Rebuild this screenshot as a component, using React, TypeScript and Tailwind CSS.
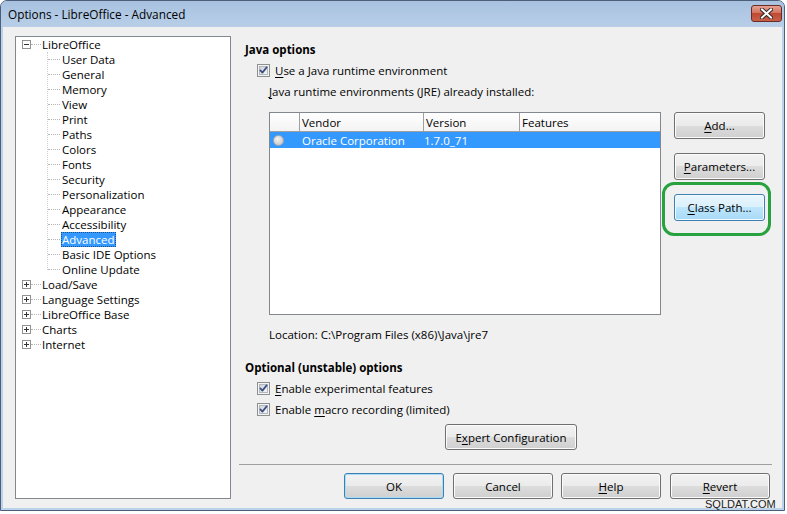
import React from "react";

const btnBase =
  "flex items-center justify-center rounded-[3px] border text-[11.5px] leading-[15px] text-black";
const btnNormal =
  btnBase +
  " border-[#707070] bg-[linear-gradient(to_bottom,#f2f2f2_0%,#ebebeb_50%,#dddddd_50%,#cfcfcf_100%)] shadow-[inset_0_0_0_1px_#fbfbfb]";
const btnHover =
  btnBase +
  " border-[#3c7fb1] bg-[linear-gradient(to_bottom,#eaf6fd_0%,#d9f0fc_50%,#bee6fd_50%,#a7d9f5_100%)] shadow-[inset_0_0_0_1px_#f4fbfe]";
const btnDefault =
  btnBase +
  " border-[#3c7fb1] bg-[linear-gradient(to_bottom,#f2f2f2_0%,#ebebeb_50%,#dddddd_50%,#cfcfcf_100%)] shadow-[inset_0_0_0_1px_#a9dcf6]";

function U({ children }: { children: React.ReactNode }) {
  return <span className="underline underline-offset-[2px]">{children}</span>;
}

function Check() {
  return (
    <svg width="13" height="13" viewBox="0 0 13 13" className="shrink-0">
      <defs>
        <linearGradient id="cbg" x1="0" y1="0" x2="1" y2="1">
          <stop offset="0" stopColor="#cdd2d9" />
          <stop offset="1" stopColor="#f7f8f9" />
        </linearGradient>
      </defs>
      <rect x="0.5" y="0.5" width="12" height="12" fill="#f4f4f4" stroke="#8e8f8f" />
      <rect x="2.5" y="2.5" width="8" height="8" fill="url(#cbg)" stroke="#b2b7be" />
      <path d="M3.4 6.4 L5.4 8.6 L9.6 3.4" stroke="#3b4f80" strokeWidth="1.7" fill="none" strokeLinecap="round" strokeLinejoin="round" />
    </svg>
  );
}

function Expander({ plus }: { plus?: boolean }) {
  return (
    <svg width="9" height="9" viewBox="0 0 9 9" className="shrink-0">
      <rect x="0.5" y="0.5" width="8" height="8" fill="#ffffff" stroke="#919191" />
      <path d="M2 4.5 H7" stroke="#333" strokeWidth="1" />
      {plus && <path d="M4.5 2 V7" stroke="#333" strokeWidth="1" />}
    </svg>
  );
}

const children = [
  "User Data",
  "General",
  "Memory",
  "View",
  "Print",
  "Paths",
  "Colors",
  "Fonts",
  "Security",
  "Personalization",
  "Appearance",
  "Accessibility",
  "Advanced",
  "Basic IDE Options",
  "Online Update",
];
const roots = ["Load/Save", "Language Settings", "LibreOffice Base", "Charts", "Internet"];

function RootRow({ label, plus }: { label: string; plus?: boolean }) {
  return (
    <div className="flex h-[15px] items-center pl-[6px]">
      <Expander plus={plus} />
      <div className="h-0 w-[10px] border-t border-dotted border-[#b4b4b4]" />
      <span className="ml-[1px]">{label}</span>
    </div>
  );
}

function Tree() {
  return (
    <div className="h-[463px] w-[216px] shrink-0 border border-[#828790] bg-white text-[11.5px] leading-[15px] text-black">
      <RootRow label="LibreOffice" />
      <div className="relative">
        <div className="absolute left-[31px] top-0 h-[218px] w-0 border-l border-dotted border-[#d0d0d0]" />
        {children.map((c) => (
          <div key={c} className="flex h-[15px] items-center pl-[32px]">
            <div className="h-0 w-[12px] border-t border-dotted border-[#b4b4b4]" />
            {c === "Advanced" ? (
              <span className="ml-[1px] bg-[#3399ff] px-[1px] text-white outline outline-1 outline-dotted outline-[#1a4f8a] -outline-offset-1">
                {c}
              </span>
            ) : (
              <span className="ml-[2px]">{c}</span>
            )}
          </div>
        ))}
      </div>
      {roots.map((r) => (
        <RootRow key={r} label={r} plus />
      ))}
    </div>
  );
}

function JreTable() {
  return (
    <div className="h-[203px] w-[392px] shrink-0 border border-[#828790] bg-white text-[11.5px] leading-[15px]">
      <div className="flex h-[19px] border-b border-[#a0a0a0] bg-[linear-gradient(to_bottom,#ffffff,#f3f3f3)]">
        <div className="w-[30px] border-r border-[#a0a0a0]" />
        <div className="flex w-[124px] items-center border-r border-[#a0a0a0] pl-[2px]">Vendor</div>
        <div className="flex w-[96px] items-center border-r border-[#a0a0a0] pl-[2px]">Version</div>
        <div className="flex flex-1 items-center pl-[2px]">Features</div>
      </div>
      <div className="flex h-[16px] items-center bg-[#3399ff] text-white">
        <div className="flex w-[30px] items-center pl-[3px]">
          <div className="h-[11px] w-[11px] rounded-full border border-[#a8a8a8] bg-[radial-gradient(circle_at_40%_35%,#f2f2f2,#bdbdbd)]" />
        </div>
        <div className="w-[124px] pl-[2px]">Oracle Corporation</div>
        <div className="w-[96px]">1.7.0_71</div>
      </div>
    </div>
  );
}

export default function App() {
  return (
    <div className="relative h-[514px] w-[787px] overflow-hidden bg-white font-['Open_Sans',sans-serif] text-[11.5px] leading-[15px] text-black">
      <div className="flex h-[511px] w-[785px] flex-col rounded-t-[7px] border border-[#4b5f78] bg-[#bcd2ea]">
        {/* Title bar */}
        <div className="relative flex h-[26px] shrink-0 items-center rounded-t-[6px] bg-[linear-gradient(to_bottom,#a7c1df,#b9cfe8)] pl-[7px]">
          <span className="text-[11.8px] text-black">Options - LibreOffice - Advanced</span>
          <div className="absolute right-[2px] top-[4px] flex h-[17px] w-[31px] items-center justify-center rounded-[3px] border border-[#6b2a22] bg-[linear-gradient(to_bottom,#e6a192_0%,#d3755f_45%,#c04a33_50%,#c7604a_100%)]">
            <svg width="13" height="11" viewBox="0 0 13 11">
              <path d="M2 1.5 L11 9.5 M11 1.5 L2 9.5" stroke="#3a2a2a" strokeWidth="4" strokeLinecap="square" />
              <path d="M2 1.5 L11 9.5 M11 1.5 L2 9.5" stroke="#ffffff" strokeWidth="2" strokeLinecap="square" />
            </svg>
          </div>
        </div>
        {/* Body */}
        <div className="mx-[2px] mb-[2px] flex flex-1 items-start bg-[#f0f0f0] pl-[12px] pt-[9px]">
          <Tree />
          <div className="ml-[8px] flex w-[533px] flex-col pt-[6px]">
            <div className="h-[15px] pl-[6px] font-bold">Java options</div>
            <div className="mt-[6px] flex h-[15px] items-center gap-[5px] pl-[18px]">
              <Check />
              <span>
                <U>U</U>se a Java runtime environment
              </span>
            </div>
            <div className="mt-[6px] h-[15px] pl-[30px]">
              <U>J</U>ava runtime environments (JRE) already installed:
            </div>
            <div className="mt-[13px] flex pl-[30px]">
              <JreTable />
              <div className="ml-[13px] flex w-[91px] flex-col gap-[14px]">
                <div className={btnNormal + " h-[27px]"}>
                  <span>
                    <U>A</U>dd...
                  </span>
                </div>
                <div className={btnNormal + " h-[27px]"}>
                  <span>
                    <U>P</U>arameters...
                  </span>
                </div>
                <div className="relative">
                  <div className={btnHover + " h-[27px]"}>
                    <span>
                      <U>C</U>lass Path...
                    </span>
                  </div>
                  <div className="absolute left-[-12px] top-[-12px] h-[54px] w-[109px] rounded-[12px] border-[3px] border-[#27a23f]" />
                </div>
              </div>
            </div>
            <div className="mt-[12px] h-[15px] pl-[30px]">Location: C:\Program Files (x86)\Java\jre7</div>
            <div className="mt-[18px] h-[15px] pl-[6px] font-bold">Optional (unstable) options</div>
            <div className="mt-[6px] flex h-[15px] items-center gap-[5px] pl-[18px]">
              <Check />
              <span>
                <U>E</U>nable experimental features
              </span>
            </div>
            <div className="mt-[6px] flex h-[15px] items-center gap-[5px] pl-[18px]">
              <Check />
              <span>
                Enable <U>m</U>acro recording (limited)
              </span>
            </div>
            <div className="mt-[7px] pl-[206px]">
              <div className={btnNormal + " h-[26px] w-[132px]"}>
                <span>
                  E<U>x</U>pert Configuration
                </span>
              </div>
            </div>
            <div className="mt-[14px] h-px w-[533px] bg-[#a0a0a0]" />
            <div className="mt-[8px] flex pl-[105px]">
              <div className={btnDefault + " h-[26px] w-[100px]"}>OK</div>
              <div className={btnNormal + " ml-[9px] h-[26px] w-[100px]"}>Cancel</div>
              <div className={btnNormal + " ml-[8px] h-[26px] w-[100px]"}>
                <span>
                  <U>H</U>elp
                </span>
              </div>
              <div className={btnNormal + " ml-[9px] h-[26px] w-[100px]"}>
                <span>
                  <U>R</U>evert
                </span>
              </div>
            </div>
          </div>
        </div>
      </div>
      <div className="absolute left-[705px] top-[498px] font-['Liberation_Sans',sans-serif] text-[11px] leading-[13px] text-[#222]">
        SQLDAT.COM
      </div>
    </div>
  );
}
